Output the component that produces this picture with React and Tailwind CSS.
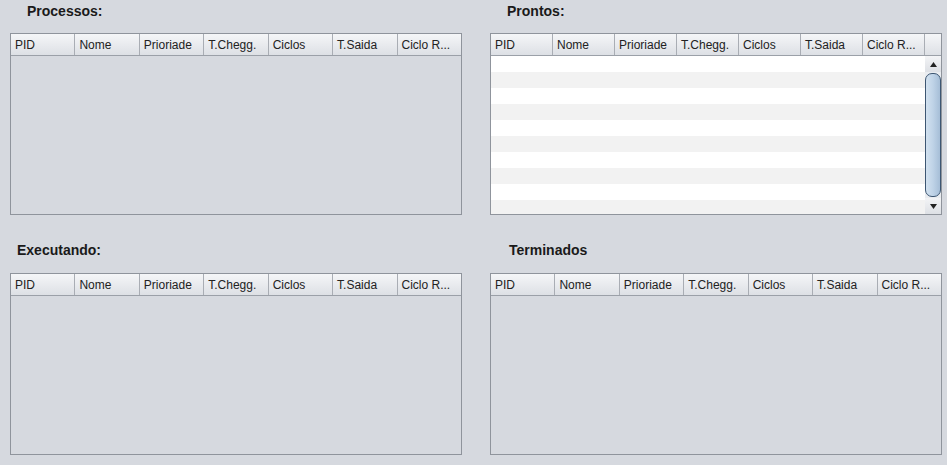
import React from "react";

const COLS = ["PID", "Nome", "Prioriade", "T.Chegg.", "Ciclos", "T.Saida", "Ciclo R..."];

function Header({ colClass, withCorner }) {
  return (
    <div className="flex h-[22px] border-b border-[#9ba0a8] bg-gradient-to-b from-[#f5f6f8] to-[#dde0e5]">
      {COLS.map((c, i) => (
        <div
          key={c}
          className={`${colClass} flex items-center pl-[4px] text-[12px] text-[#222] overflow-hidden whitespace-nowrap ${
            i < COLS.length - 1 || withCorner ? "border-r border-[#a9adb4]" : ""
          }`}
        >
          {c}
        </div>
      ))}
      {withCorner && <div className="w-[16px] shrink-0" />}
    </div>
  );
}

function EmptyTable() {
  return (
    <div className="w-[452px] h-[182px] border border-[#8f949c] flex flex-col">
      <Header colClass="flex-1 min-w-0" />
      <div className="flex-1 bg-[#d6d9df]" />
    </div>
  );
}

function ScrollTable() {
  const rows = Array.from({ length: 10 });
  return (
    <div className="w-[452px] h-[182px] border border-[#8f949c] flex flex-col">
      <Header colClass="w-[62px] shrink-0" withCorner />
      <div className="flex flex-1 min-h-0">
        <div className="flex-1 flex flex-col overflow-hidden">
          {rows.map((_, i) => (
            <div key={i} className={`h-[16px] shrink-0 ${i % 2 === 0 ? "bg-white" : "bg-[#f2f2f2]"}`} />
          ))}
        </div>
        <div className="w-[16px] shrink-0 flex flex-col bg-[#e9ecf0]">
          <div className="h-[16px] shrink-0 flex items-center justify-center bg-gradient-to-b from-[#f3f4f6] to-[#dde0e5]">
            <svg width="7" height="5" viewBox="0 0 7 5">
              <polygon points="3.5,0 7,5 0,5" fill="#222" />
            </svg>
          </div>
          <div className="flex-1 my-[1px] rounded-[7px] border border-[#3d5672] bg-gradient-to-r from-[#d3e2f0] via-[#bfd3e7] to-[#a6bed7]" />
          <div className="h-[16px] shrink-0 flex items-center justify-center bg-gradient-to-b from-[#f3f4f6] to-[#dde0e5]">
            <svg width="7" height="5" viewBox="0 0 7 5">
              <polygon points="0,0 7,0 3.5,5" fill="#222" />
            </svg>
          </div>
        </div>
      </div>
    </div>
  );
}

function Label({ children, className }) {
  return (
    <div className={`h-[33px] flex items-start pt-[1px] text-[14px] font-bold text-[#1a1a1a] ${className}`}>
      {children}
    </div>
  );
}

export default function App() {
  return (
    <div
      className="w-[947px] h-[465px] bg-[#d6d9df] overflow-hidden"
      style={{ fontFamily: '"Liberation Sans", Arial, sans-serif' }}
    >
      <div className="grid grid-cols-[452px_452px] gap-x-[28px] pl-[10px]">
        <div>
          <Label className="pl-[17px]">Processos:</Label>
          <EmptyTable />
        </div>
        <div>
          <Label className="pl-[17px]">Prontos:</Label>
          <ScrollTable />
        </div>
        <div>
          <div className="h-[58px] flex items-start pt-[25px] pl-[7px] text-[14px] font-bold text-[#1a1a1a]">
            Executando:
          </div>
          <EmptyTable />
        </div>
        <div>
          <div className="h-[58px] flex items-start pt-[25px] pl-[19px] text-[14px] font-bold text-[#1a1a1a]">
            Terminados
          </div>
          <EmptyTable />
        </div>
      </div>
    </div>
  );
}
